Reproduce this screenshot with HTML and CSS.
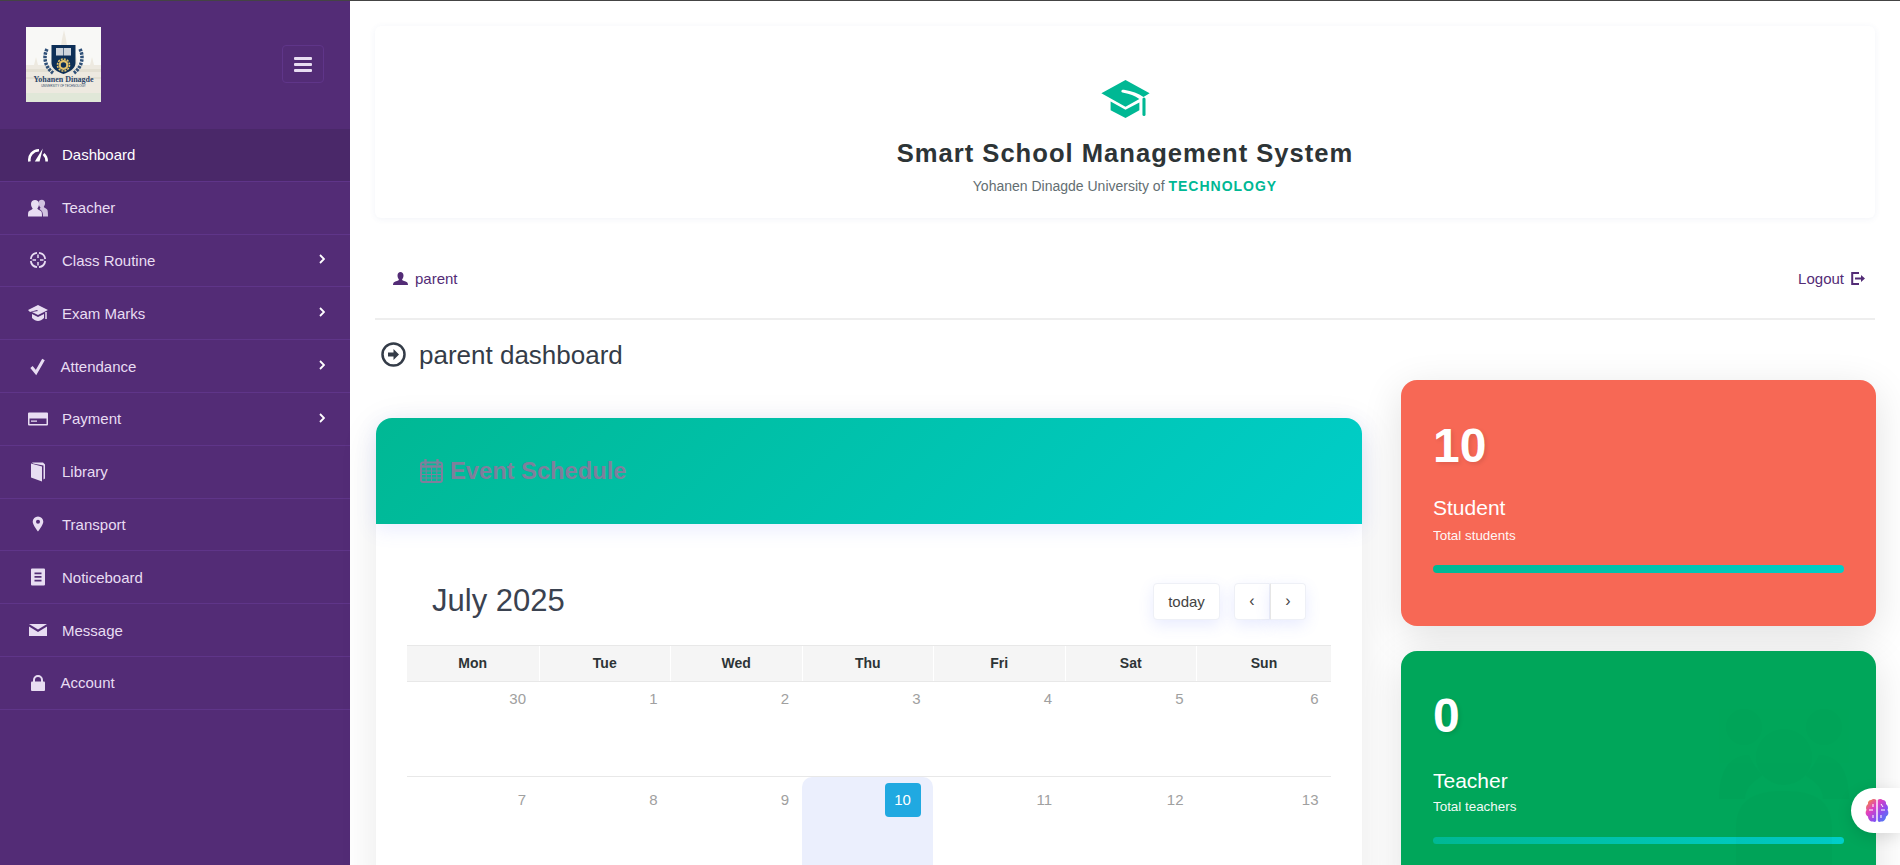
FILE: index.html
```html
<!DOCTYPE html>
<html lang="en">
<head>
<meta charset="utf-8">
<title>Smart School Management System</title>
<link rel="stylesheet" href="styles.css">
</head>
<body>
<div class="app">
  <aside class="sidebar">
    <div class="brand">
      <svg class="logo" viewBox="0 0 75 75" role="img" aria-label="Yohanen Dinagde logo">
        <rect width="75" height="75" fill="#f8f8f6"/>
        <path d="M0 38h8l2-8 2 8h12l2-10 2 10h4l4-26 2-9 2 9 4 26h4l2-10 2 10h12l2-8 2 8h8v28H0z" fill="#ede9e0"/>
        <path d="M0 42h75v3H0zM0 50h75v2H0z" fill="#e3dfd3"/>
        <rect y="66" width="75" height="9" fill="#e0e7d8"/>
        <path d="M21 22c-4 8-2 18 6 24M54 22c4 8 2 18-6 24" fill="none" stroke="#2f5078" stroke-width="3.500" stroke-dasharray="2.500 1"/>
        <path d="M25.500 18h24v18c0 6-6.500 9-12 11-5.500-2-12-5-12-11z" fill="#0d2f57"/>
        <path d="M30 21h7.200v7.500H30zM37.800 21H45v7.500h-7.200z" fill="#cfd5dc"/>
        <circle cx="37.500" cy="38" r="6" fill="none" stroke="#e5c36b" stroke-width="1.600" stroke-dasharray="2 1.100"/>
        <circle cx="37.500" cy="38" r="3.800" fill="none" stroke="#e5c36b" stroke-width="2.200"/>
        <text class="logo-name" x="37.500" y="54.500" text-anchor="middle">Yohanen Dinagde</text>
        <text class="logo-sub" x="37.500" y="59.500" text-anchor="middle">UNIVERSITY OF TECHNOLOGY</text>
      </svg>
      <button class="toggle" type="button" aria-label="Toggle menu"><span></span><span></span><span></span></button>
    </div>
    <nav class="menu">
      <a class="menu-item active">
        <svg class="menu-icon" viewBox="0 0 20 14"><path d="M1.500 13.500A9.500 9.500 0 0 1 11 2.200" fill="none" stroke="currentColor" stroke-width="2.600"/><path d="M6.800 13.500 14.800.500l-3.200 13z" fill="currentColor"/><path d="M15.600 6a9.500 9.500 0 0 1 3 7.500" fill="none" stroke="currentColor" stroke-width="2.600"/></svg>
        <span>Dashboard</span>
      </a>
      <a class="menu-item">
        <svg class="menu-icon" viewBox="0 0 20 17"><path d="M10.500 3.500c0-2 1.400-3.200 3.300-3.200s3.300 1.400 3.300 3.300c0 1.800-.8 3-1.300 3.700.3 1 2 1.600 3 2.400.8.600 1.200 1.800 1.200 7.300h-5c0-3-.5-5-2-6.200L11.500 9.500c.6-.4.900-.9 1-1.500-1-1-2-2.700-2-4.500z" fill="currentColor" opacity=".85"/><path d="M3 4.500C3 2 4.800.5 7 .5s4 1.500 4 4c0 2-1 3.700-1.700 4.500.4 1.200 2.700 1.800 3.800 2.700.8.600.9 2 .9 5.300H0c0-3.300.1-4.700.9-5.300C2 10.800 4.300 10.200 4.700 9 4 8.200 3 6.500 3 4.500z" fill="currentColor"/></svg>
        <span>Teacher</span>
      </a>
      <a class="menu-item">
        <svg class="menu-icon" viewBox="0 0 20 17"><path d="M9 1.300A7.300 7.300 0 0 0 2.800 7.500M11 1.300a7.300 7.300 0 0 1 6.200 6.200M2.800 9.500A7.300 7.300 0 0 0 9 15.700M17.200 9.500a7.300 7.300 0 0 1-6.200 6.200" fill="none" stroke="currentColor" stroke-width="1.800"/><path d="M10 3v3.500M10 10.500V14M4.500 8.500H8M12 8.500h3.500" stroke="currentColor" stroke-width="1.500"/></svg>
        <span>Class Routine</span>
        <svg class="chevron" viewBox="0 0 6 10"><path d="M1 1l4 4-4 4" fill="none" stroke="currentColor" stroke-width="1.800"/></svg>
      </a>
      <a class="menu-item">
        <svg class="menu-icon" viewBox="0 0 20 16"><path d="M10 0 20 5l-10 5-6-3 6-1-1-1-7 2L0 5z" fill="currentColor"/><path d="M4 9l6 3 6-3v4c-2 2-4 3-6 3s-4-1-6-3z" fill="currentColor"/><path d="M18 7v7" stroke="currentColor" stroke-width="1.500"/></svg>
        <span>Exam Marks</span>
        <svg class="chevron" viewBox="0 0 6 10"><path d="M1 1l4 4-4 4" fill="none" stroke="currentColor" stroke-width="1.800"/></svg>
      </a>
      <a class="menu-item tight">
        <svg class="menu-icon" viewBox="0 0 20 15"><path d="M3.500 8.500 8 14 15.500 1" fill="none" stroke="currentColor" stroke-width="3"/></svg>
        <span>Attendance</span>
        <svg class="chevron" viewBox="0 0 6 10"><path d="M1 1l4 4-4 4" fill="none" stroke="currentColor" stroke-width="1.800"/></svg>
      </a>
      <a class="menu-item">
        <svg class="menu-icon" viewBox="0 0 20 13"><path fill-rule="evenodd" d="M1 0h18a1 1 0 0 1 1 1v11a1 1 0 0 1-1 1H1a1 1 0 0 1-1-1V1a1 1 0 0 1 1-1zm.5 6v5.500h17V6zM3 8h6v1.300H3z" fill="currentColor"/></svg>
        <span>Payment</span>
        <svg class="chevron" viewBox="0 0 6 10"><path d="M1 1l4 4-4 4" fill="none" stroke="currentColor" stroke-width="1.800"/></svg>
      </a>
      <a class="menu-item">
        <svg class="menu-icon" viewBox="0 0 20 19"><path d="M3 1 14 4v15L3 15z" fill="currentColor"/><path d="M4 0h11l2 2v14l-1.500 1V3L5 1z" fill="currentColor"/></svg>
        <span>Library</span>
      </a>
      <a class="menu-item">
        <svg class="menu-icon" viewBox="0 0 20 15"><path fill-rule="evenodd" d="M10 0a5.300 5.300 0 0 1 5.300 5.300C15.300 8.500 10 15 10 15S4.700 8.500 4.700 5.300A5.300 5.300 0 0 1 10 0zm0 3.300a2 2 0 1 0 0 4 2 2 0 0 0 0-4z" fill="currentColor"/></svg>
        <span>Transport</span>
      </a>
      <a class="menu-item">
        <svg class="menu-icon" viewBox="0 0 20 17"><path fill-rule="evenodd" d="M4 0h12a1 1 0 0 1 1 1v15a1 1 0 0 1-1 1H4a1 1 0 0 1-1-1V1a1 1 0 0 1 1-1zm2.500 4v1.700h7V4zm0 3.600v1.700h7V7.600zm0 3.600v1.700h7v-1.700z" fill="currentColor"/></svg>
        <span>Noticeboard</span>
      </a>
      <a class="menu-item">
        <svg class="menu-icon" viewBox="0 0 20 12"><path d="M1 0h18L10 5.500z" fill="currentColor"/><path d="M1 2.500 10 8l9-5.500V12H1z" fill="currentColor"/></svg>
        <span>Message</span>
      </a>
      <a class="menu-item tight">
        <svg class="menu-icon" viewBox="0 0 20 16"><path d="M6 7V5a4 4 0 0 1 8 0v2" fill="none" stroke="currentColor" stroke-width="2"/><rect x="3" y="6.500" width="14" height="9.500" rx="1" fill="currentColor"/></svg>
        <span>Account</span>
      </a>
    </nav>
  </aside>

  <main class="main">
    <header class="banner">
      <svg class="banner-cap" viewBox="0 0 47 37"><path d="M23.500 0 47 13 41 16.500c-5-3.500-11-5.500-19-7-3-.5-3.500 2.500-.500 3 6 1 11 3 15.500 6L23.500 26 0 13z" fill="#00b894"/><path d="M9 21l14.500 8L37 22v7.500L23.500 37 9 29.500z" fill="#00b894"/><path d="M41.500 18.500v15" stroke="#00b894" stroke-width="3" stroke-linecap="round"/></svg>
      <h1 class="banner-title">Smart School Management System</h1>
      <p class="banner-sub">Yohanen Dinagde University of <strong>TECHNOLOGY</strong></p>
    </header>

    <div class="userbar">
      <a class="user-link">
        <svg class="user-icon" viewBox="0 0 15 13"><path d="M4.500 3.500C4.500 1.500 5.800 0 7.500 0s3 1.500 3 3.500c0 2-1 3.500-1.500 4.200.5 1 3.500 1.500 5 2.500.7.500 1 1.800 1 2.800H0c0-1 .3-2.300 1-2.800 1.500-1 4.500-1.500 5-2.500-.5-.7-1.500-2.200-1.500-4.200z" fill="currentColor"/></svg>
        parent
      </a>
      <a class="user-link">
        Logout
        <svg class="logout-icon" viewBox="0 0 14 13"><path d="M8 1H1.200v11H8" fill="none" stroke="currentColor" stroke-width="2"/><path d="M4 5.500h6V3l4 3.500-4 3.500V7.500H4z" fill="currentColor"/></svg>
      </a>
    </div>

    <h2 class="page-title">
      <svg class="title-icon" viewBox="0 0 25 25"><circle cx="12.500" cy="12.500" r="11" fill="none" stroke="currentColor" stroke-width="2.500"/><path d="M7 10.500h5.500V7l5.500 5.500-5.500 5.500v-3.500H7z" fill="currentColor"/></svg>
      parent dashboard
    </h2>

    <div class="grid">
      <section class="calendar-card">
        <div class="calendar-head">
          <svg class="cal-icon" viewBox="0 0 23 24"><rect x="1" y="3.500" width="21" height="19.500" rx="2" fill="none" stroke="currentColor" stroke-width="2"/><path d="M1 7.500h21" stroke="currentColor" stroke-width="2.500"/><path d="M1 12h21M1 15.500h21M1 19h21M6.200 8v15M11.500 8v15M16.800 8v15" stroke="currentColor" stroke-width="1"/><path d="M5.500 1v4M17.500 1v4" stroke="currentColor" stroke-width="2.500" stroke-linecap="round"/></svg>
          <h3 class="calendar-heading">Event Schedule</h3>
        </div>
        <div class="calendar-body">
          <div class="toolbar">
            <div class="month">July 2025</div>
            <div class="toolbar-actions">
              <button class="cal-btn today-btn" type="button">today</button>
              <div class="btn-group">
                <button class="cal-btn" type="button">‹</button>
                <button class="cal-btn" type="button">›</button>
              </div>
            </div>
          </div>
          <div class="weekdays">
            <div>Mon</div><div>Tue</div><div>Wed</div><div>Thu</div><div>Fri</div><div>Sat</div><div>Sun</div>
          </div>
          <div class="week">
            <div class="day">30</div><div class="day">1</div><div class="day">2</div><div class="day">3</div><div class="day">4</div><div class="day">5</div><div class="day">6</div>
          </div>
          <div class="week has-today">
            <div class="day">7</div><div class="day">8</div><div class="day">9</div><div class="day today"><span class="today-num">10</span></div><div class="day">11</div><div class="day">12</div><div class="day">13</div>
          </div>
        </div>
      </section>

      <div class="stats">
        <article class="stat stat-red">
          <div class="stat-num">10</div>
          <div class="stat-name">Student</div>
          <div class="stat-desc">Total students</div>
          <div class="stat-bar"></div>
        </article>
        <article class="stat stat-green">
          <svg class="stat-mark" viewBox="0 0 140 170"><circle cx="33" cy="28" r="18"/><circle cx="113" cy="28" r="18"/><circle cx="73" cy="58" r="28"/><path d="M8 100c0-30 12-44 30-44 6 14 14 20 14 20-12 8-18 14-18 24zM138 100c0-30-12-44-30-44-6 14-14 20-14 20 12 8 18 14 18 24zM25 170v-40c0-26 14-38 48-38s48 12 48 38v40z"/></svg>
          <div class="stat-num">0</div>
          <div class="stat-name">Teacher</div>
          <div class="stat-desc">Total teachers</div>
          <div class="stat-bar"></div>
        </article>
      </div>
    </div>
  </main>
</div>

<div class="assistant">
  <svg class="brain" viewBox="0 0 24 25">
    <defs><linearGradient id="brain-grad" x1="0" y1="0" x2="1" y2="1"><stop offset="0" stop-color="#f59b23"/><stop offset=".35" stop-color="#e03fc0"/><stop offset=".65" stop-color="#8a4df0"/><stop offset="1" stop-color="#3a8bf5"/></linearGradient></defs>
    <path d="M11.300 2C10 .5 7.500.5 6.300 2 4 2 2.500 4 3 6 1 7.500.5 10 1.500 12 0 14 .5 17.500 3 18.500c0 3 2.500 5.500 5 5 1.500 1 3.300.5 3.300-1.500zM12.700 2c1.300-1.500 3.800-1.500 5 0C20 2 21.500 4 21 6c2 1.500 2.500 4 1.500 6 1.500 2 1 5.500-1.500 6.500 0 3-2.500 5.500-5 5-1.500 1-3.300.5-3.300-1.500z" fill="url(#brain-grad)"/>
    <path d="M4 12h4M8 6v3M8 17v3M16 6l2 3M20 12h-4M16 20v-3" stroke="#fff" stroke-width="1" fill="none"/>
  </svg>
</div>
</body>
</html>
```

FILE: styles.css
```css
* { box-sizing: border-box; }
html, body { height: 100%; }
body {
  margin: 0;
  border-top: 1px solid #444;
  overflow: hidden;
  background: #fff;
  color: #333;
  font-family: "Liberation Sans", Arial, sans-serif;
}
.app { display: flex; height: 864px; overflow: hidden; }

/* sidebar */
.sidebar { flex: 0 0 350px; background: #532c76; color: #e8ddf2; }
.brand {
  height: 128px;
  padding: 26px 26px 0 26px;
  display: flex;
  align-items: flex-start;
  justify-content: space-between;
}
.logo { width: 75px; height: 75px; display: block; }
.logo-name { font: bold 8px "Liberation Serif", serif; fill: #2c4468; }
.logo-sub { font: 3px "Liberation Sans", sans-serif; fill: #2c4468; }
.toggle {
  width: 42px;
  height: 38px;
  margin-top: 18px;
  padding: 0;
  background: transparent;
  border: 1px solid #5f3589;
  border-radius: 4px;
  display: flex;
  flex-direction: column;
  align-items: center;
  justify-content: center;
  gap: 3px;
}
.toggle span { width: 18px; height: 3px; background: #e8ddf2; border-radius: 1px; }
.menu-item {
  height: 52.800px;
  padding: 0 25px 0 28px;
  display: flex;
  align-items: center;
  border-bottom: 1px solid #5f3589;
  font-size: 15px;
}
.menu-item span { flex: 1; }
.menu-item.active { background: #4a2869; color: #fff; }
.menu-icon { flex: 0 0 20px; width: 20px; height: 20px; margin-right: 14px; }
.menu-item.tight .menu-icon { margin-right: 12.500px; }
.chevron { width: 6px; height: 10px; color: #fff; margin-top: -2px; }

/* main column */
.main { flex: 1; min-width: 0; padding: 25px 25px 0; }
.banner {
  height: 192px;
  padding-top: 29px;
  text-align: center;
  border-radius: 6px;
  box-shadow: 0 1px 6px rgba(60, 80, 160, .07);
}
.banner-cap { width: 49px; height: 38px; display: block; margin: 25px auto 0; }
.banner-title {
  margin: 19px 0 0;
  font-size: 25.600px;
  line-height: 32px;
  font-weight: 700;
  letter-spacing: 1px;
  color: #2d3436;
}
.banner-sub { margin: 8px 0 0; font-size: 14px; line-height: 18px; color: #636e72; }
.banner-sub strong { color: #00b894; letter-spacing: 1px; }

.userbar {
  height: 102px;
  padding: 20px 10px 0 18px;
  display: flex;
  align-items: center;
  justify-content: space-between;
  border-bottom: 2px solid #eee;
}
.user-link { display: flex; align-items: center; font-size: 15px; color: #532c76; }
.user-icon { width: 15px; height: 13px; margin-right: 7px; }
.logout-icon { width: 14px; height: 13px; margin-left: 7px; }

.page-title {
  margin: 0;
  height: 60px;
  padding: 5px 0 0 6px;
  display: flex;
  align-items: flex-start;
  font-size: 26px;
  line-height: 60px;
  font-weight: 400;
  color: #343c48;
}
.title-icon { width: 25px; height: 25px; margin: 17px 13px 0 0; }

.grid {
  width: 1500px;
  margin-left: 1px;
  display: grid;
  grid-template-columns: 986px 475px;
  column-gap: 39px;
  align-items: start;
}

/* calendar card */
.calendar-card {
  margin-top: 38px;
  border-radius: 16px;
  background: #fff;
  box-shadow: 0 10px 40px rgba(0, 0, 0, .09);
}
.calendar-head {
  height: 106px;
  padding-left: 44px;
  display: flex;
  align-items: center;
  gap: 7px;
  border-radius: 16px 16px 0 0;
  background: linear-gradient(135deg, #00b894, #00cec9);
  box-shadow: 0 5px 20px rgba(100, 120, 255, .15);
  color: #7f7f9c;
}
.cal-icon { width: 23px; height: 24px; }
.calendar-heading { margin: 0; font-size: 23.700px; font-weight: 700; }
.calendar-body { padding: 0 31px 30px; }
.toolbar {
  height: 121px;
  padding: 39px 25px 6px;
  display: flex;
  align-items: center;
  justify-content: space-between;
}
.month { font-size: 31px; color: #3a4250; }
.toolbar-actions { display: flex; gap: 14px; }
.btn-group { display: flex; }
.cal-btn {
  height: 37px;
  width: 36px;
  padding: 0;
  background: #fff;
  border: 1px solid #eef0f6;
  border-radius: 4px;
  box-shadow: 0 5px 15px rgba(90, 110, 255, .14);
  font-family: inherit;
  font-size: 16px;
  color: #444;
}
.btn-group .cal-btn:first-child { border-radius: 4px 0 0 4px; }
.btn-group .cal-btn:last-child { border-radius: 0 4px 4px 0; border-left: 1px solid #e6e6e6; }
.today-btn { width: 67px; font-size: 15px; }
.weekdays {
  display: grid;
  grid-template-columns: repeat(6, 131.500px) 1fr;
  height: 37px;
  background: #f5f5f5;
  border-top: 1px solid #e8e8e8;
  border-bottom: 1px solid #e8e8e8;
}
.weekdays div {
  text-align: center;
  font-size: 14px;
  font-weight: 700;
  line-height: 35px;
  color: #2d3436;
  border-left: 1px solid #fff;
}
.weekdays div:first-child { border-left: 0; }
.week {
  display: grid;
  grid-template-columns: repeat(6, 131.500px) 1fr;
  height: 95px;
  border-bottom: 1px solid #e8e8e8;
}
.day {
  padding: 8px 12.500px 0 0;
  text-align: right;
  font-size: 15px;
  line-height: 18px;
  color: #a0a0a0;
}
.has-today .day { padding-top: 14px; }
.has-today .day.today { padding-top: 6px; background: #ebeffd; border-radius: 10px 10px 0 0; }
.today-num {
  display: inline-block;
  width: 36px;
  height: 34px;
  line-height: 34px;
  text-align: center;
  color: #fff;
  background: #20a9e1;
  border-radius: 4px;
}

/* stat cards */
.stats { display: flex; flex-direction: column; gap: 25px; }
.stat {
  position: relative;
  height: 246px;
  padding: 38px 32px 0;
  border-radius: 16px;
  color: #fff;
  overflow: hidden;
  box-shadow: 0 10px 40px rgba(0, 0, 0, .12);
}
.stat-red { background: #f76855; }
.stat-green { background: #00a65a; }
.stat-num {
  font-size: 48px;
  font-weight: 700;
  line-height: 56px;
  text-shadow: 2px 2px 4px rgba(0, 0, 0, .1);
}
.stat-name { margin-top: 20px; font-size: 21px; line-height: 28px; }
.stat-desc { margin-top: 4px; font-size: 13.400px; line-height: 20px; opacity: .95; }
.stat-bar {
  height: 8px;
  margin-top: 19px;
  border-radius: 4px;
  background: linear-gradient(90deg, #00b894, #00cec9);
}
.stat-green .stat-num { margin-top: -1px; }
.stat-green .stat-name { margin-top: 23px; }
.stat-green .stat-desc { margin-top: 2px; }
.stat-green .stat-bar { height: 7px; margin-top: 20px; }
.stat-mark {
  position: absolute;
  right: 25px;
  top: 48px;
  width: 140px;
  height: 170px;
  fill: #000;
  opacity: .012;
}

/* floating assistant tab */
.assistant {
  position: fixed;
  right: 0;
  top: 788px;
  width: 49px;
  height: 45px;
  padding: 10px 0 0 14px;
  background: #fff;
  border-radius: 23px 0 0 23px;
  box-shadow: 0 4px 16px rgba(0, 0, 0, .12);
}
.brain { width: 24px; height: 25px; display: block; }
```
